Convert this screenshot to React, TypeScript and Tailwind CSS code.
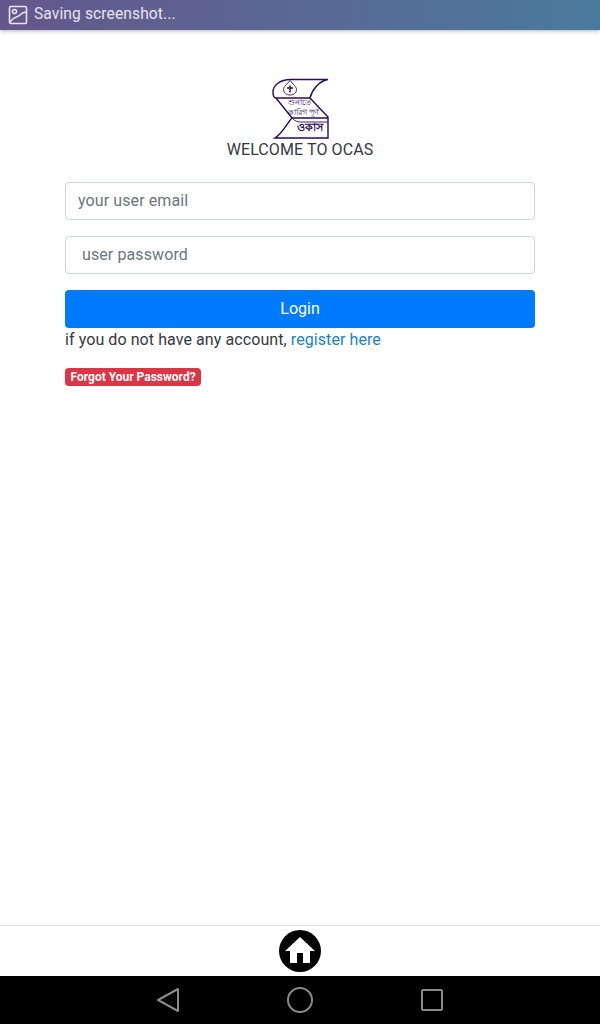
const sans = 'font-[Roboto,"Liberation_Sans",sans-serif]'

function ScreenshotIcon() {
  return (
    <svg width="20" height="20" viewBox="0 0 20 20" fill="none" stroke="#e8e4f0" strokeWidth="1.6">
      <rect x="1.5" y="1.5" width="17" height="17" rx="1.5" />
      <circle cx="6.5" cy="6.5" r="2" />
      <path d="M2 17 C 6 11, 9 13, 12 10 C 14 8, 16 7, 18 7" />
    </svg>
  )
}

function Logo() {
  return (
    <svg width="58" height="62" viewBox="0 0 58 62" fill="none" stroke="#2a0a5e" strokeWidth="1.4">
      <path d="M57 1.5 H20 C8 1.5 2 8 2 14 C2 18 3 20 5 20 L21 40 C16 45 12 55 4 60 H57 V39 L39 20 C41 12 48 3 57 1.5 Z" fill="#fff" />
      <path d="M5 20 H39 M21 40 H57" />
      <path d="M21 40 C24 43 26 44 30 44 H57" strokeWidth="0.9" />
      <path d="M19 2.5 C16 6 12.5 9 12.5 11.5 C12.5 15 15.5 17 19 17 C22.5 17 25.5 15 25.5 11.5 C25.5 9 22 6 19 2.5 Z" strokeWidth="0.9" />
      <path d="M16 10 H22 M19 7.5 V14.5" strokeWidth="1.4" />
      <g fill="#2a0a5e" stroke="none" fontFamily="'Noto Sans', sans-serif">
        <text x="17" y="27" fontSize="8">শুনাতে</text>
        <text x="17" y="37" fontSize="8">কারিগ পূর্ণ</text>
        <text x="26" y="53" fontSize="11" fontWeight="700">ওকাস</text>
      </g>
    </svg>
  )
}

function HomeGlyph() {
  return (
    <svg width="32" height="30" viewBox="0 0 32 30" fill="#fff">
      <path d="M16 1 L31 15 H26 V27 H19 V17 H13 V27 H6 V15 H1 Z" />
    </svg>
  )
}

export default function App() {
  return (
    <div className={`flex h-[1024px] w-[600px] flex-col bg-white ${sans}`}>
      {/* android status toast */}
      <div className="flex h-[30px] shrink-0 items-center gap-[6px] bg-gradient-to-r from-[#64568c] to-[#487a9c] pl-[8px] shadow-[0_1px_4px_rgba(0,0,0,0.3)]">
        <ScreenshotIcon />
        <span className="text-[15.6px] tracking-[0.1px] text-[#e8e4f0]">Saving screenshot...</span>
      </div>

      <main className="flex flex-1 flex-col px-[65px] pt-[48px]">
        <div className="flex flex-col items-center">
          <Logo />
          <p className="text-[16px] leading-[20px] tracking-[0.1px] text-[#333a40]">WELCOME TO OCAS</p>
        </div>

        <input
          placeholder="your user email"
          className="mt-[22px] h-[38px] w-full rounded border border-[#ced4da] px-3 pb-[2px] text-[16px] tracking-[0.1px] placeholder:text-[#6c757d]"
        />
        <input
          placeholder="user password"
          className="mt-4 h-[38px] w-full rounded border border-[#ced4da] px-4 pb-[2px] text-[16px] tracking-[0.1px] placeholder:text-[#6c757d]"
        />
        <button className="mt-4 h-[38px] w-full rounded bg-[#007bff] text-[16px] text-white">Login</button>
        <p className="text-[16px] leading-[24px] tracking-[0.08px] text-[#333a40]">
          if you do not have any account, <a className="text-[#1a82d0]">register here</a>
        </p>
        <div className="mt-[16px] flex">
          <span className="rounded bg-[#dc3545] px-[5.5px] py-[3px] text-[12px] leading-[12px] font-bold text-white">
            Forgot Your Password?
          </span>
        </div>
      </main>

      <div className="flex h-[51px] shrink-0 items-center justify-center border-t border-[#dee2e6]">
        <div className="flex h-[42px] w-[42px] items-center justify-center rounded-full bg-black">
          <HomeGlyph />
        </div>
      </div>

      <div className="flex h-[48px] shrink-0 items-center justify-center gap-[106px] bg-black">
        <svg width="24" height="26" viewBox="0 0 24 26" fill="none" stroke="#8a8a8a" strokeWidth="2" strokeLinejoin="round">
          <path d="M22 2 V24 L2 13 Z" />
        </svg>
        <svg width="28" height="28" viewBox="0 0 28 28" fill="none" stroke="#8a8a8a" strokeWidth="2">
          <circle cx="14" cy="14" r="12" />
        </svg>
        <svg width="24" height="24" viewBox="0 0 24 24" fill="none" stroke="#8a8a8a" strokeWidth="2">
          <rect x="2" y="2" width="20" height="20" rx="1" />
        </svg>
      </div>
    </div>
  )
}
